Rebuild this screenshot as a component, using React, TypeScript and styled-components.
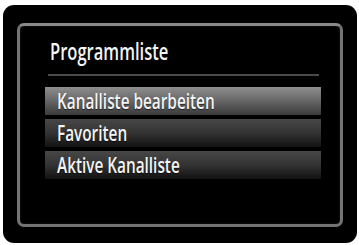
import React from 'react'
import styled, { createGlobalStyle } from 'styled-components'

const GlobalStyle = createGlobalStyle`
  html, body {
    margin: 0;
    padding: 0;
    background: #ffffff;
  }
`

const Screen = styled.div`
  width: 359px;
  height: 245px;
  padding: 5px 2px 2px 3px;
  box-sizing: border-box;
  background: #ffffff;
`

const Panel = styled.div`
  width: 354px;
  height: 238px;
  box-sizing: border-box;
  padding: 18px 14px 16px 14px;
  background: #000000;
  border-radius: 11px;
`

const Frame = styled.div`
  height: 100%;
  box-sizing: border-box;
  border: 3px solid #747474;
  border-top-color: #8a8a8a;
  border-radius: 7px;
  background: #000000;
  box-shadow: inset 0 0 2px rgba(255, 255, 255, 0.15);
  padding: 10px 19px 0 25px;
  font-family: 'Open Sans', 'Liberation Sans', sans-serif;
  font-weight: 600;
  color: #f4f4f4;
`

const Title = styled.div`
  font-size: 24px;
  line-height: 30px;
  padding-left: 5px;
  white-space: nowrap;
`

const Label = styled.span<{ $scale: number }>`
  display: inline-block;
  white-space: nowrap;
  transform: scaleX(${({ $scale }) => $scale});
  transform-origin: left center;
`

const Separator = styled.div`
  height: 2px;
  margin: 8px 2px 11px 3px;
  background: #4a4a4a;
`

const List = styled.div`
  display: flex;
  flex-direction: column;
  gap: 4px;
`

const Row = styled.div<{ $active?: boolean }>`
  height: 28px;
  padding-left: 12px;
  display: flex;
  align-items: center;
  font-size: 21px;
  text-shadow: 0 1px 1px rgba(0, 0, 0, 0.6);
  background: ${({ $active }) =>
    $active
      ? 'linear-gradient(to bottom, #8e8e8e 0%, #6a6a6a 45%, #3a3a3a 100%)'
      : 'linear-gradient(to bottom, #474747 0%, #333333 50%, #121212 100%)'};
`

const items = ['Kanalliste bearbeiten', 'Favoriten', 'Aktive Kanalliste']

export default function App() {
  return (
    <>
      <GlobalStyle />
      <Screen>
        <Panel>
          <Frame>
            <Title>
              <Label $scale={0.69}>Programmliste</Label>
            </Title>
            <Separator />
            <List>
              {items.map((item, i) => (
                <Row key={item} $active={i === 0}>
                  <Label $scale={0.73}>{item}</Label>
                </Row>
              ))}
            </List>
          </Frame>
        </Panel>
      </Screen>
    </>
  )
}
